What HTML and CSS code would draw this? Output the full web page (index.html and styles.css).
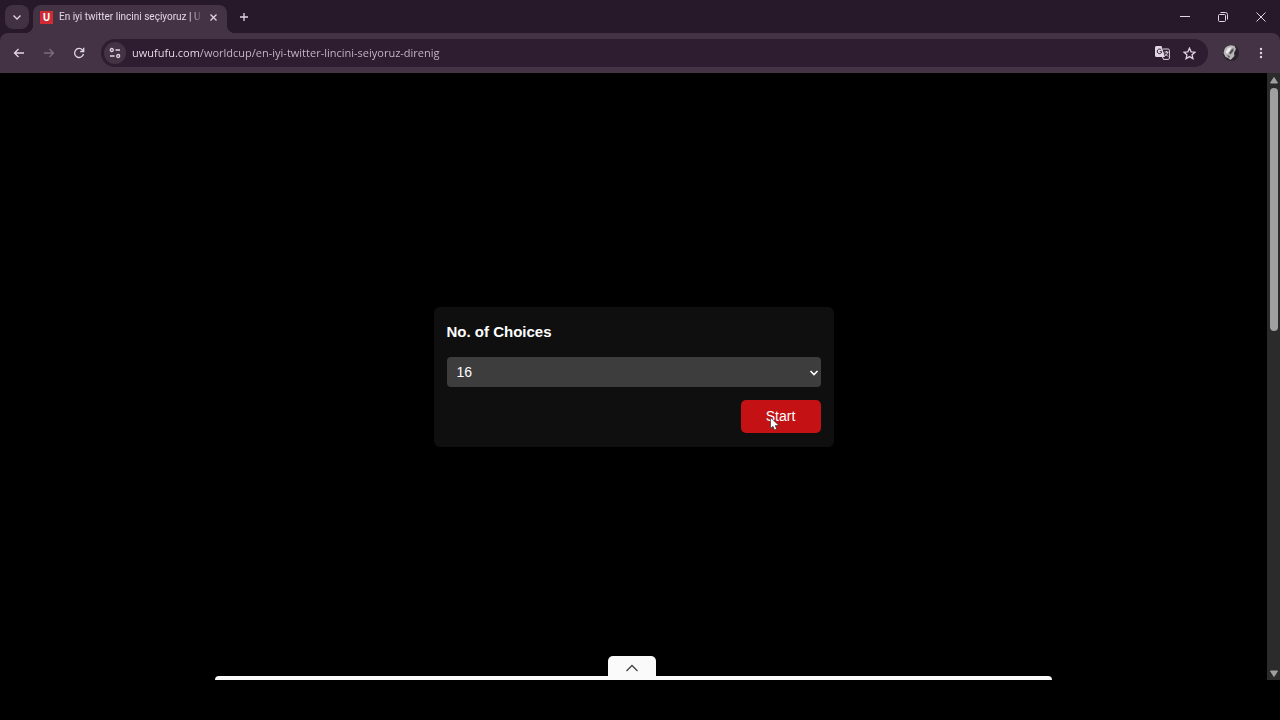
FILE: index.html
```
<!DOCTYPE html>
<html lang="tr">
<head>
  <meta charset="UTF-8">
  <meta name="viewport" content="width=device-width, initial-scale=1.0">
  <title>En iyi twitter lincini seçiyoruz</title>
  <link rel="stylesheet" href="styles.css">
</head>
<body>
  <header class="browser">
    <div class="tabs">
      <button class="tab-search" aria-label="Search tabs">
        <svg width="10" height="10" viewBox="0 0 10 10"><path d="M1.500 3.500 5 7l3.500-3.500"/></svg>
      </button>
      <div class="tab">
        <span class="favicon">U</span>
        <span class="tab-title">En iyi twitter lincini seçiyoruz | U</span>
        <button class="icon-btn tab-close" aria-label="Close tab">
          <svg width="9" height="9" viewBox="0 0 9 9"><path d="M1.500 1.500l6 6M7.500 1.500l-6 6"/></svg>
        </button>
      </div>
      <button class="icon-btn new-tab" aria-label="New tab">
        <svg width="10" height="10" viewBox="0 0 10 10"><path d="M5 1v8M1 5h8"/></svg>
      </button>
      <div class="window-btns">
        <button class="icon-btn" aria-label="Minimize">
          <svg class="thin" width="10" height="10" viewBox="0 0 10 10"><path d="M0 4.500h10"/></svg>
        </button>
        <button class="icon-btn" aria-label="Restore">
          <svg class="thin" width="10" height="10" viewBox="0 0 10 10"><rect x=".5" y="2.500" width="7" height="7" rx="1"/><path d="M2.500 .5h5a2 2 0 0 1 2 2v5"/></svg>
        </button>
        <button class="icon-btn" aria-label="Close">
          <svg class="thin" width="10" height="10" viewBox="0 0 10 10"><path d="M.5 .5l9 9M9.500 .5l-9 9"/></svg>
        </button>
      </div>
    </div>
    <div class="toolbar">
      <button class="icon-btn" aria-label="Back">
        <svg width="12" height="12" viewBox="0 0 12 12"><path d="M11 6H1.500M5.500 2 1.500 6l4 4"/></svg>
      </button>
      <button class="icon-btn" aria-label="Forward" disabled>
        <svg width="12" height="12" viewBox="0 0 12 12"><path d="M1 6h9.500M6.500 2l4 4-4 4"/></svg>
      </button>
      <button class="icon-btn" aria-label="Reload">
        <svg width="12" height="12" viewBox="0 0 12 12"><path d="M10.500 7A4.500 4.500 0 1 1 9.500 3L10.500 4.200M10.700 .8v3.700H7.200"/></svg>
      </button>
      <div class="omnibox">
        <button class="site-info" aria-label="Site information">
          <svg width="12" height="12" viewBox="0 0 12 12"><circle cx="2.800" cy="3" r="1.500"/><path d="M6.500 3H11M1 9h4.500"/><circle cx="9.200" cy="9" r="1.500"/></svg>
        </button>
        <input class="url" type="text" aria-label="Address" value="uwufufu.com/worldcup/en-iyi-twitter-lincini-seiyoruz-direnig">
        <button class="icon-btn" aria-label="Translate">
          <svg class="translate" width="15" height="14" viewBox="0 0 15 14">
            <path class="fill" d="M1.500 0h5l3.500 11H1.500A1.500 1.500 0 0 1 0 9.500v-8A1.500 1.500 0 0 1 1.500 0z"/>
            <path d="M8 3h5.200c.7 0 1.200.5 1.200 1.200v8c0 .7-.5 1.200-1.200 1.200H8.500L7.500 11"/>
            <path d="M9.500 6H13.500M11.500 5v1M12.800 6c-.4 1.700-1.400 3-2.500 4M10 7.500l3 3"/>
            <path class="dark" d="M6.200 3.800A2.300 2.300 0 1 0 6.800 5.700H4.800"/>
          </svg>
        </button>
        <button class="icon-btn" aria-label="Bookmark">
          <svg width="13" height="13" viewBox="0 0 13 13"><path d="M6.500 1.200l1.600 3.600 3.900.4-2.900 2.600.8 3.800-3.400-2-3.400 2 .8-3.800L1 5.200l3.900-.4z"/></svg>
        </button>
      </div>
      <button class="icon-btn avatar" aria-label="Profile">
        <svg width="16" height="16" viewBox="0 0 16 16">
          <circle cx="8" cy="8" r="8" fill="#2a232b"/>
          <path fill="#b9b6b8" d="M1.500 4C3.500.5 8-.5 11.500 1l1.500 3-2 4 .5 3-4 4-2.500-2-2.500-1L.5 8z"/>
          <path fill="#eceaeb" d="M4.500 3.500l4-1.500-1.500 4-3 3-1.500-2z"/>
          <path fill="#555055" d="M8 5l2.500-2v3L7.500 9.500 6 8zM4 10l3 1-1 2z"/>
        </svg>
      </button>
      <button class="icon-btn" aria-label="Menu">
        <svg class="dots" width="4" height="12" viewBox="0 0 4 12"><circle cx="2" cy="2" r="1.200"/><circle cx="2" cy="6" r="1.200"/><circle cx="2" cy="10" r="1.200"/></svg>
      </button>
    </div>
  </header>

  <div class="viewport">
    <main class="page">
      <form class="choices">
        <label for="count">No. of Choices</label>
        <div class="select">
          <select id="count">
            <option>8</option>
            <option selected>16</option>
            <option>32</option>
          </select>
          <svg class="select-arrow" width="10" height="8" viewBox="0 0 10 8"><path d="M1.500 2 5 5.500 8.500 2"/></svg>
        </div>
        <button class="start" type="button">
          Start
          <svg class="cursor" width="10" height="14" viewBox="0 0 10 14"><path d="M.5 .5v11l2.500-2.200 1.500 3.700 2.200-.9L5.200 8.600H9z"/></svg>
        </button>
      </form>
      <div class="drawer">
        <button class="drawer-toggle" aria-label="Open">
          <svg width="14" height="8" viewBox="0 0 14 8"><path d="M1.500 7 7 1.500 12.500 7"/></svg>
        </button>
        <div class="drawer-edge"></div>
      </div>
    </main>
    <div class="scrollbar">
      <svg width="10" height="8" viewBox="0 0 10 8"><path d="M5 1.500 8.500 7h-7z"/></svg>
      <div class="track"><div class="thumb"></div></div>
      <svg width="10" height="8" viewBox="0 0 10 8"><path d="M5 6.500 8.500 1h-7z"/></svg>
    </div>
  </div>
</body>
</html>
```
FILE: styles.css
```
* {
  box-sizing: border-box;
}
body {
  margin: 0;
  min-height: 100vh;
  padding-bottom: 40px;
  display: flex;
  flex-direction: column;
  background: #000;
  font-family: "Open Sans", "Noto Sans", sans-serif;
}
button {
  border: none;
  padding: 0;
  background: none;
  color: inherit;
  font: inherit;
}
svg {
  display: block;
  fill: none;
  stroke: currentColor;
  stroke-width: 1.3;
}
.thin {
  stroke-width: 1;
}

/* browser window */
.browser {
  background: #271929;
  color: #e3d6e4;
}
.tabs {
  display: flex;
  align-items: center;
  height: 33px;
  padding-left: 5px;
}
.icon-btn {
  display: flex;
  align-items: center;
  justify-content: center;
  width: 30px;
  height: 24px;
}
.icon-btn:disabled {
  color: #7d6c80;
}
.tab-search {
  display: flex;
  align-items: center;
  justify-content: center;
  width: 24px;
  height: 24px;
  border-radius: 8px;
  background: #413143;
}
.tab {
  position: relative;
  display: flex;
  align-items: center;
  align-self: flex-end;
  width: 194px;
  height: 28px;
  margin-left: 4px;
  padding: 0 4px 4px 7px;
  border-radius: 8px 8px 0 0;
  background: #433345;
}
.tab::before,
.tab::after {
  content: "";
  position: absolute;
  bottom: 0;
  width: 8px;
  height: 8px;
}
.tab::before {
  right: 100%;
  background: radial-gradient(circle at 0 0, transparent 8px, #433345 8px);
}
.tab::after {
  left: 100%;
  background: radial-gradient(circle at 100% 0, transparent 8px, #433345 8px);
}
.favicon {
  width: 13px;
  height: 13px;
  margin-right: 6px;
  background: #cf2b35;
  color: #fff;
  font: bold 10px/13px "Open Sans", sans-serif;
  text-align: center;
}
.tab-title {
  flex: 1;
  overflow: hidden;
  white-space: nowrap;
  font-family: Roboto, sans-serif;
  font-size: 10px;
  line-height: 16px;
  mask-image: linear-gradient(to left, transparent, #000 12px);
}
.tab-close {
  width: 20px;
}
.new-tab {
  width: 24px;
  margin-left: 5px;
}
.window-btns {
  display: flex;
  gap: 8px;
  margin-left: auto;
  padding-right: 4px;
}
.toolbar {
  display: flex;
  align-items: center;
  height: 40px;
  padding: 0 4px;
  border-radius: 8px 8px 0 0;
  background: #433345;
}
.omnibox {
  flex: 1;
  display: flex;
  align-items: center;
  height: 28px;
  margin: 0 8px 0 7px;
  padding: 0 5px 0 3px;
  border-radius: 14px;
  background: #2e1d30;
}
.omnibox .icon-btn {
  width: 27px;
}
.site-info {
  display: flex;
  align-items: center;
  justify-content: center;
  width: 22px;
  height: 22px;
  border-radius: 50%;
  background: #433345;
}
/* host name is brighter than the path */
.url {
  flex: 1;
  min-width: 0;
  border: none;
  padding: 0 0 0 6px;
  outline: none;
  background: linear-gradient(to right, #f0e6f1 74px, #c9bccb 74px);
  background-clip: text;
  color: transparent;
  font: 11px/16px "Open Sans", "Noto Sans", sans-serif;
}
.translate {
  stroke-width: 1;
}
.translate .fill {
  fill: currentColor;
  stroke: none;
}
.translate .dark {
  stroke: #2e1d30;
}
.avatar svg {
  stroke: none;
}
.dots {
  fill: currentColor;
  stroke: none;
}

/* page */
.viewport {
  flex: 1;
  display: flex;
}
.page {
  flex: 1;
  display: grid;
  place-items: center;
  font-family: "Liberation Sans", Arial, sans-serif;
}
.page > * {
  grid-area: 1 / 1;
}
.choices {
  display: flex;
  flex-direction: column;
  width: 400px;
  padding: 13px 13px 14px;
  border-radius: 6px;
  background: #0f0f0f;
  color: #fff;
}
.choices label {
  margin-bottom: 13px;
  font-size: 15px;
  font-weight: bold;
  line-height: 24px;
}
.select {
  position: relative;
}
.select select {
  display: block;
  appearance: none;
  width: 100%;
  height: 30px;
  padding: 0 10px;
  border: none;
  border-radius: 4px;
  background: #3d3d3d;
  color: #fff;
  font: 14px "Liberation Sans", Arial, sans-serif;
}
.select-arrow {
  position: absolute;
  right: 2px;
  top: 12px;
  stroke-width: 1.6;
  pointer-events: none;
}
.start {
  position: relative;
  align-self: flex-end;
  width: 80px;
  height: 33px;
  margin-top: 13px;
  border-radius: 5px;
  background: #c41114;
  font-size: 14px;
}
.cursor {
  position: absolute;
  left: 29px;
  top: 17px;
  fill: #fff;
  stroke: #222;
  stroke-width: .6;
}
.drawer {
  align-self: end;
  display: flex;
  flex-direction: column;
  align-items: center;
  width: 66%;
}
.drawer-toggle {
  display: flex;
  align-items: center;
  justify-content: center;
  width: 48px;
  height: 20px;
  margin-right: 4px;
  padding-top: 4px;
  border-radius: 5px 5px 0 0;
  background: #fafafa;
  color: #444;
}
.drawer-edge {
  width: 100%;
  height: 4px;
  border-radius: 4px 4px 0 0;
  background: #fafafa;
}

.scrollbar {
  display: flex;
  flex-direction: column;
  align-items: center;
  width: 13px;
  padding: 3px 0 2px;
  background: #2b2b2b;
}
.scrollbar svg {
  fill: #a0a0a0;
  stroke: #a0a0a0;
  stroke-width: 1;
  stroke-linejoin: round;
}
.track {
  flex: 1;
  width: 8px;
  padding: 4px 0;
}
.thumb {
  height: 42%;
  border-radius: 4px;
  background: #a0a0a0;
}
```
